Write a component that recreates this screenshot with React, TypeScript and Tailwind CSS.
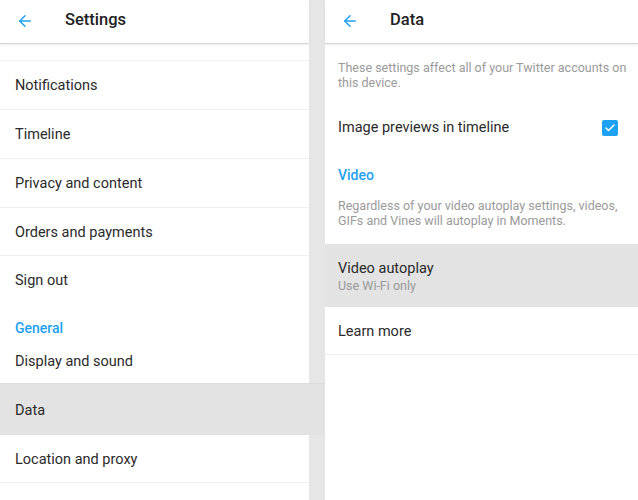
import { ArrowLeft, Check } from 'lucide-react';

const font = { fontFamily: 'Roboto, "Noto Sans", Arial, sans-serif' };

function Header({ title }: { title: string }) {
  return (
    <div className="h-[44px] flex items-center bg-white border-b border-[#d6d6d6] shadow-[0_1px_2px_rgba(0,0,0,0.08)] relative z-10">
      <ArrowLeft className="w-[18px] h-[18px] text-[#1da1f2] ml-[16px] -mt-[2px]" strokeWidth={2} />
      <span className="ml-[31px] -mt-[2px] text-[16.5px] font-medium text-[#222]">{title}</span>
    </div>
  );
}

const topItems = ['Notifications', 'Timeline', 'Privacy and content', 'Orders and payments', 'Sign out'];

export default function App() {
  return (
    <div className="flex w-[638px] h-[500px] overflow-hidden bg-white" style={font}>
      {/* Settings list */}
      <div className="w-[325px] shrink-0 bg-[#e6e6e6] flex flex-col">
        <div className="w-[309px]">
          <Header title="Settings" />
        </div>
        <div className="w-[309px] h-[16px] bg-white" />
        {topItems.map((item, i) => (
          <div
            key={item}
            className={`w-[309px] bg-white border-t border-[#efefef] flex items-center pt-[2px] pl-[15px] text-[14.5px] text-[#2a2a2a] ${i === 3 ? 'h-[48px]' : 'h-[49px]'}`}
          >
            {item}
          </div>
        ))}
        <div className="w-[309px] bg-white pt-[16px] pl-[15px] text-[14px] leading-[17px] font-medium text-[#1da1f2]">
          General
        </div>
        <div className="w-[309px] h-[46px] bg-white flex items-center pt-[4px] pl-[15px] text-[14.5px] text-[#2a2a2a]">
          Display and sound
        </div>
        <div className="w-full h-[52px] bg-[#e3e3e3] border-t border-[#dcdcdc] flex items-center pt-[3px] pl-[15px] text-[14.5px] text-[#2a2a2a]">
          Data
        </div>
        <div className="w-[309px] h-[48px] bg-white border-b border-[#efefef] flex items-center pt-[2px] pl-[15px] text-[14.5px] text-[#2a2a2a]">
          Location and proxy
        </div>
        <div className="w-[309px] flex-1 bg-white" />
      </div>

      {/* Data panel */}
      <div className="flex-1 flex flex-col bg-white">
        <Header title="Data" />
        <p className="pt-[16px] pl-[13px] pr-[4px] text-[12.5px] leading-[15px] text-[#9a9a9a]">
          These settings affect all of your Twitter accounts on this device.
        </p>
        <div className="h-[76px] flex items-center justify-between pl-[13px] pr-[20px] text-[14.5px] text-[#2a2a2a]">
          <span>Image previews in timeline</span>
          <span className="w-[16px] h-[16px] rounded-[2px] bg-[#1da1f2] flex items-center justify-center">
            <Check className="w-[12px] h-[12px] text-white" strokeWidth={3} />
          </span>
        </div>
        <div className="pl-[13px] pt-[1px] text-[14px] leading-[17px] font-medium text-[#1da1f2]">Video</div>
        <p className="mt-[14px] pl-[13px] pr-[12px] text-[12.5px] leading-[15px] text-[#9a9a9a]">
          Regardless of your video autoplay settings, videos, GIFs and Vines will autoplay in Moments.
        </p>
        <div className="mt-[16px] h-[63px] bg-[#e3e3e3] flex flex-col justify-center pt-[3px] pl-[13px]">
          <span className="text-[14.5px] leading-[18px] text-[#2a2a2a]">Video autoplay</span>
          <span className="text-[12.5px] leading-[16px] text-[#9a9a9a]">Use Wi-Fi only</span>
        </div>
        <div className="h-[48px] border-b border-[#efefef] flex items-center pt-[2px] pl-[13px] text-[14.5px] text-[#2a2a2a]">
          Learn more
        </div>
      </div>
    </div>
  );
}
